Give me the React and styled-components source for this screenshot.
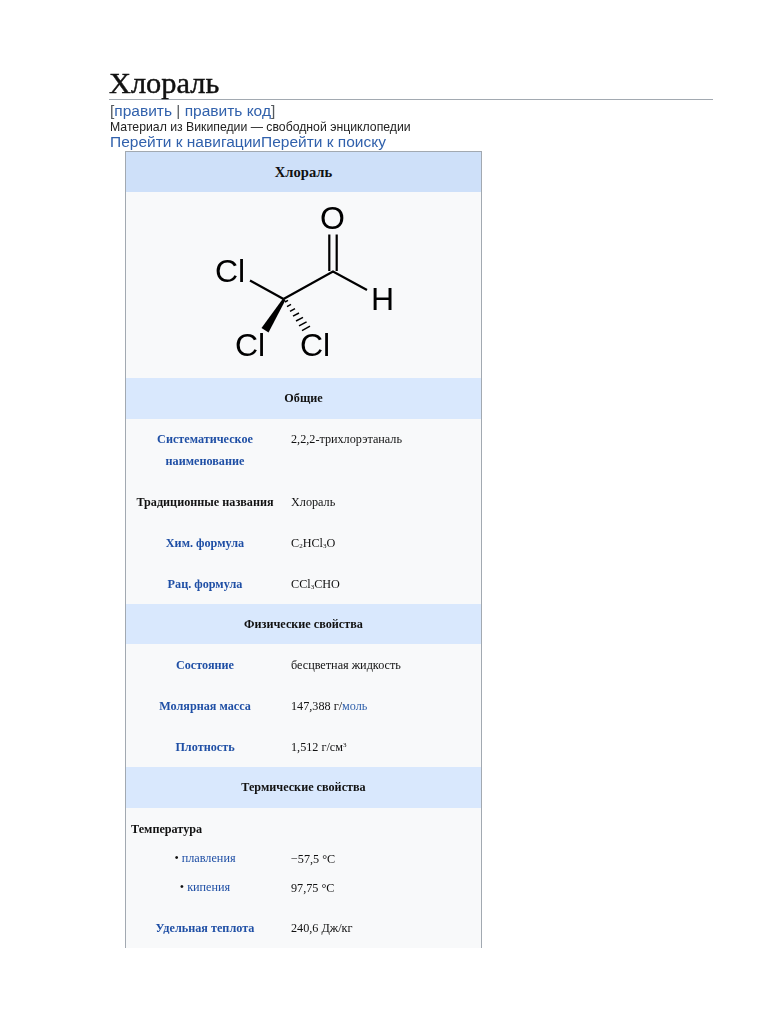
import React from "react";
import styled, { createGlobalStyle } from "styled-components";

const Global = createGlobalStyle`
  html, body { margin: 0; padding: 0; background: #fff; }
  body { width: 768px; height: 1024px; overflow: hidden; }
`;

const Page = styled.main`
  box-sizing: border-box;
  width: 768px;
  height: 1024px;
  padding: 66px 55px 0 109px;
  font-family: "Liberation Sans", Arial, sans-serif;
  color: #202122;
  filter: blur(0.4px);
`;

const Title = styled.h1`
  margin: 0;
  height: 33px;
  line-height: 35px;
  font-family: "Liberation Serif", "Times New Roman", serif;
  font-size: 30.4px;
  font-weight: 400;
  color: #111;
  -webkit-text-stroke: 0.45px #111;
  border-bottom: 1px solid #a2a9b1;
`;

const EditLine = styled.div`
  margin-top: 3px;
  padding-left: 1px;
  height: 17px;
  line-height: 16px;
  font-size: 15.5px;
  color: #54595d;
`;

const Link = styled.a`
  color: #3161ac;
`;

const Tagline = styled.div`
  height: 14px;
  line-height: 14px;
  padding-left: 1px;
  font-size: 12.25px;
  color: #222;
`;

const JumpLine = styled.div`
  height: 17px;
  line-height: 16px;
  padding-left: 1px;
  font-size: 15.5px;
`;

const Clip = styled.div`
  margin: 0 0 0 16px;
  width: 357px;
  height: 797px;
  overflow: hidden;
`;

const Infobox = styled.div`
  box-sizing: border-box;
  width: 357px;
  border: 1px solid #a2a9b1;
  border-bottom: 0;
  background: #f8f9fa;
  display: grid;
  grid-template-columns: 158px 1fr;
  font-family: "Liberation Serif", "Times New Roman", serif;
  font-size: 12.2px;
  color: #111;
`;

const Banner = styled.div`
  grid-column: 1 / -1;
  height: ${(p) => p.$h}px;
  display: flex;
  align-items: center;
  justify-content: center;
  font-weight: 700;
  background: ${(p) => (p.$main ? "#cee0f9" : "#d9e8fd")};
  font-size: ${(p) => (p.$main ? "14.6px" : "12.2px")};
`;

const Figure = styled.div`
  grid-column: 1 / -1;
  height: 186px;
`;

const Label = styled.div`
  height: ${(p) => p.$h}px;
  display: flex;
  align-items: center;
  justify-content: center;
  text-align: center;
  line-height: 22px;
  font-weight: ${(p) => (p.$plain ? 400 : 700)};
  color: ${(p) => (p.$dark ? "#111" : "#1f4fa5")};
  white-space: nowrap;
`;

const Value = styled.div`
  height: ${(p) => p.$h}px;
  box-sizing: border-box;
  padding: ${(p) => (p.$top ? "9px" : "1px")} 0 0 7px;
  line-height: ${(p) => (p.$top ? 22 : p.$h)}px;
  white-space: pre;
`;

const Group = styled.div`
  grid-column: 1 / -1;
  height: ${(p) => p.$h}px;
  box-sizing: border-box;
  padding: 1px 0 0 5px;
  display: flex;
  align-items: center;
  font-weight: 700;
`;

const Sub = styled.span`
  font-size: 7px;
  line-height: 0;
  vertical-align: -1px;
`;

const Sup = styled.span`
  font-size: 7px;
  line-height: 0;
  vertical-align: 4px;
`;

const Bullet = styled.span`
  color: #111;
  margin-right: 3px;
`;

const Molecule = () => (
  <svg width="355" height="186" viewBox="126 192 355 186" fill="none">
    <g stroke="#000" strokeWidth="2.2" strokeLinecap="butt">
      <path d="M329.3 234.5V271M336.7 234.5V271" />
      <path d="M283.5 299L333 271.5L367 290" />
      <path d="M283.5 299L250 280.5" />
    </g>
    <path d="M283 298.5L261.5 328L268.5 332.5L285.5 300Z" fill="#000" />
    <path
      d="M285 302l3-1.6M287 306.6l4-2.2M290 311.4l5-2.8M293 316.2l6-3.2M296 321l7-3.6M299 325.8l7.6-4M302 330.6l8-4.4"
      stroke="#000"
      strokeWidth="1.5"
    />
    <g fill="#000" fontFamily="'Liberation Sans', Arial, sans-serif" fontSize="32">
      <text x="320" y="229">O</text>
      <text x="215" y="282">Cl</text>
      <text x="371" y="310">H</text>
      <text x="235" y="356">Cl</text>
      <text x="300" y="356">Cl</text>
    </g>
  </svg>
);

export default function App() {
  return (
    <Page>
      <Global />
      <Title>Хлораль</Title>
      <EditLine>
        [<Link>править</Link> | <Link>править код</Link>]
      </EditLine>
      <Tagline>Материал из Википедии — свободной энциклопедии</Tagline>
      <JumpLine>
        <Link>Перейти к навигации</Link>
        <Link>Перейти к поиску</Link>
      </JumpLine>
      <Clip>
        <Infobox>
          <Banner $main $h={40}>Хлораль</Banner>
          <Figure><Molecule /></Figure>
          <Banner $h={41}>Общие</Banner>

          <Label $h={62}>Систематическое<br />наименование</Label>
          <Value $h={62} $top>2,2,2-трихлорэтаналь</Value>
          <Label $h={41} $dark>Традиционные названия</Label>
          <Value $h={41}>Хлораль</Value>
          <Label $h={41}>Хим. формула</Label>
          <Value $h={41}>C<Sub>2</Sub>HCl<Sub>3</Sub>O</Value>
          <Label $h={41}>Рац. формула</Label>
          <Value $h={41}>CCl<Sub>3</Sub>CHO</Value>

          <Banner $h={40}>Физические свойства</Banner>
          <Label $h={41}>Состояние</Label>
          <Value $h={41}>бесцветная жидкость</Value>
          <Label $h={41}>Молярная масса</Label>
          <Value $h={41}>147,388 г/<Link>моль</Link></Value>
          <Label $h={41}>Плотность</Label>
          <Value $h={41}>1,512 г/см<Sup>3</Sup></Value>

          <Banner $h={41}>Термические свойства</Banner>
          <Group $h={41}>Температура</Group>
          <Label $h={18} $plain><Bullet>•</Bullet>плавления</Label>
          <Value $h={18}>−57,5 °C</Value>
          <Label $h={40} $plain><Bullet>•</Bullet>кипения</Label>
          <Value $h={40}>97,75 °C</Value>
          <Label $h={41}>Удельная теплота</Label>
          <Value $h={41}>240,6 Дж/кг</Value>
        </Infobox>
      </Clip>
    </Page>
  );
}
